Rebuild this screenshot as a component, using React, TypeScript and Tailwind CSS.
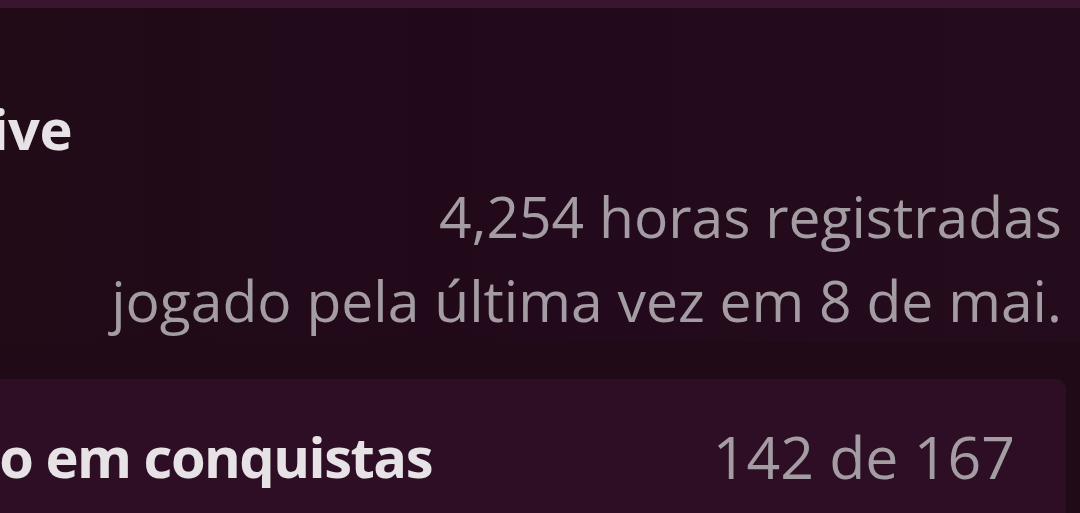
export default function App() {
  return (
    <div
      className="w-[1080px] h-[513px] overflow-hidden flex flex-col bg-[#210a18]"
      style={{ fontFamily: '"Open Sans", "Noto Sans", sans-serif' }}
    >
      {/* top edge of the panel above */}
      <div className="h-[8px] shrink-0 bg-[#3a152f]" />

      {/* game header */}
      <div className="flex flex-col pt-[88px] bg-gradient-to-r from-[#210b17] via-[#22091b] to-[#250c1d]">
        <div className="flex justify-end w-[72px] overflow-hidden whitespace-nowrap">
          <span className="text-[56px] leading-[64px] font-bold text-[#e6e2e6] tracking-[-0.5px]">
            Counter-Strike: Global Offensive
          </span>
        </div>
        <div className="flex flex-col items-end pr-[18px] mt-[14px] text-[57px] leading-[84px] text-[#a39ca3] whitespace-nowrap">
          <span>4,254 horas registradas</span>
          <span>jogado pela última vez em 8 de mai.</span>
        </div>
      </div>

      {/* achievements box */}
      <div className="flex mt-[37px] flex-1">
        <div className="flex-1 flex items-start justify-between pt-[45px] pr-[51px] bg-[#2e0e24] rounded-tr-[10px]">
          <div className="flex justify-end w-[432px] overflow-hidden whitespace-nowrap">
            <span className="text-[56px] leading-[64px] font-bold text-[#e6e2e6] tracking-[-1.5px]">
              Progresso em conquistas
            </span>
          </div>
          <span className="text-[59px] leading-[64px] text-[#a39ca3] whitespace-nowrap">142 de 167</span>
        </div>
        <div className="w-[14px] shrink-0" />
      </div>
    </div>
  );
}
